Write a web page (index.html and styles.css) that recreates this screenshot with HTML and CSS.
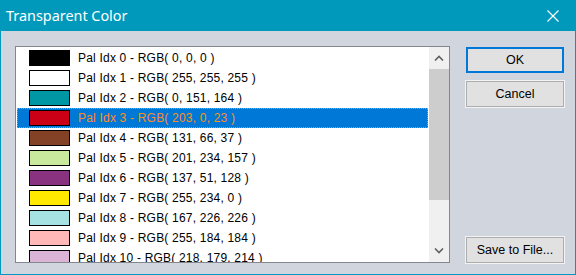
FILE: index.html
```html
<!DOCTYPE html>
<html lang="en">
<head>
    <meta charset="UTF-8">
    <title>Transparent Color</title>
    <link rel="stylesheet" href="styles.css">
</head>
<body>

    <div class="dialog">
        <header class="titlebar">
            <span class="title">Transparent Color</span>
            <svg class="close" width="12" height="12" viewBox="0 0 12 12">
                <path d="M0.5 0.5 L11.5 11.5 M11.5 0.5 L0.5 11.5" stroke="#fff" stroke-width="1.2" fill="none"/>
            </svg>
        </header>

        <main class="content">
            <div class="listbox">
                <ul class="items">
                    <li><span class="swatch" style="background:rgb(0,0,0)"></span>Pal Idx 0 - RGB( 0, 0, 0 )</li>
                    <li><span class="swatch" style="background:rgb(255,255,255)"></span>Pal Idx 1 - RGB( 255, 255, 255 )</li>
                    <li><span class="swatch" style="background:rgb(0,151,164)"></span>Pal Idx 2 - RGB( 0, 151, 164 )</li>
                    <li class="selected"><span class="swatch" style="background:rgb(203,0,23)"></span>Pal Idx 3 - RGB( 203, 0, 23 )</li>
                    <li><span class="swatch" style="background:rgb(131,66,37)"></span>Pal Idx 4 - RGB( 131, 66, 37 )</li>
                    <li><span class="swatch" style="background:rgb(201,234,157)"></span>Pal Idx 5 - RGB( 201, 234, 157 )</li>
                    <li><span class="swatch" style="background:rgb(137,51,128)"></span>Pal Idx 6 - RGB( 137, 51, 128 )</li>
                    <li><span class="swatch" style="background:rgb(255,234,0)"></span>Pal Idx 7 - RGB( 255, 234, 0 )</li>
                    <li><span class="swatch" style="background:rgb(167,226,226)"></span>Pal Idx 8 - RGB( 167, 226, 226 )</li>
                    <li><span class="swatch" style="background:rgb(255,184,184)"></span>Pal Idx 9 - RGB( 255, 184, 184 )</li>
                    <li><span class="swatch" style="background:rgb(218,179,214)"></span>Pal Idx 10 - RGB( 218, 179, 214 )</li>
                </ul>
                <div class="scrollbar">
                    <div class="arrow">
                        <svg width="10" height="6" viewBox="0 0 10 6"><path d="M1 5.5 L5 1.5 L9 5.5" stroke="#606060" stroke-width="1.6" fill="none"/></svg>
                    </div>
                    <div class="track">
                        <div class="thumb"></div>
                    </div>
                    <div class="arrow">
                        <svg width="10" height="6" viewBox="0 0 10 6"><path d="M1 0.5 L5 4.5 L9 0.5" stroke="#606060" stroke-width="1.6" fill="none"/></svg>
                    </div>
                </div>
            </div>

            <div class="buttons">
                <button class="default">OK</button>
                <button>Cancel</button>
                <button class="save">Save to File...</button>
            </div>
        </main>
    </div>

</body>
</html>
```

FILE: styles.css
```css
body {
    margin: 0;
    font-family: "Liberation Sans", Arial, sans-serif;
    font-size: 12px;
}
.dialog {
    width: 576px;
    height: 275px;
    box-sizing: border-box;
    background-color: #d1d5de;
    border: 1px solid #0099bc;
    border-top: none;
    display: flex;
    flex-direction: column;
}
.titlebar {
    height: 31px;
    margin: 0 -1px;
    background-color: #0099bc;
    display: flex;
    align-items: center;
    justify-content: space-between;
    padding: 0 17px 0 6px;
    flex-shrink: 0;
}
.title {
    color: #fff;
    font-family: "Noto Sans", sans-serif;
    font-size: 14.4px;
    margin-top: -1px;
}
.close {
    margin-top: 1px;
}
.content {
    flex: 1;
    display: flex;
    padding: 15px 11px 11px 14px;
}
.listbox {
    width: 435px;
    height: 217px;
    box-sizing: border-box;
    border: 1px solid #828790;
    background-color: #fff;
    display: flex;
    overflow: hidden;
}
.items {
    list-style-type: none;
    margin: 0;
    padding: 1px;
    flex: 1;
}
.items li {
    height: 20px;
    box-sizing: border-box;
    display: flex;
    align-items: center;
    color: #000;
    white-space: nowrap;
    font-size: 12px;
    letter-spacing: 0.2px;
}
.items li.selected {
    background-color: #0078d7;
    color: #ff8c1a;
    outline: 1px dotted #ff8c1a;
    outline-offset: -1px;
}
.swatch {
    width: 41px;
    height: 16px;
    box-sizing: border-box;
    border: 1px solid #000;
    margin: 0 8px 0 12px;
}
.scrollbar {
    width: 20px;
    background-color: #f0f0f0;
    display: flex;
    flex-direction: column;
}
.arrow {
    height: 22px;
    display: flex;
    align-items: center;
    justify-content: center;
}
.track {
    flex: 1;
}
.thumb {
    height: 131px;
    background-color: #cdcdcd;
}
.buttons {
    margin-left: 16px;
    padding-top: 1px;
    display: flex;
    flex-direction: column;
    gap: 8px;
}
button {
    width: 98px;
    height: 26px;
    box-sizing: border-box;
    background-color: #e1e1e1;
    border: 1px solid #adadad;
    outline: 1px solid #f2f3f6;
    font-family: "Liberation Sans", Arial, sans-serif;
    font-size: 12.5px;
    color: #000;
    padding: 0;
}
button.default {
    border: 2px solid #0078d7;
    outline: none;
}
button.save {
    margin-top: auto;
}
```
